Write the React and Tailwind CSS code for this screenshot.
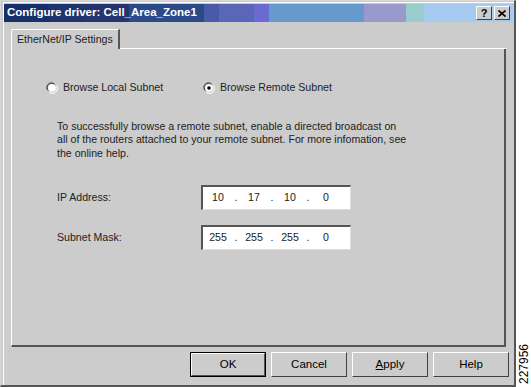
export default function App() {
  const font = { fontFamily: '"Liberation Sans", Arial, sans-serif' };
  return (
    <div className="w-[531px] h-[387px] bg-white flex overflow-hidden text-[10.6px] text-black" style={font}>
      <div className="w-[516px] shrink-0 h-[387px] bg-[#cccccc] border-l border-t border-l-[#d8d8d8] border-t-[#d8d8d8] border-r-2 border-b-2 border-r-[#555555] border-b-[#555555] flex flex-col pl-[1px] pt-[1px]">
        <div className="ml-[1px] border-l border-t border-white flex flex-col flex-1 pr-[1px]">
          {/* Title bar */}
          <div className="relative h-[18px] mt-[1px] flex items-center">
            <div className="absolute inset-0 flex">
              <div className="w-[45px] bg-[#15306a]"></div>
              <div className="w-[35px] bg-[#1d346e]"></div>
              <div className="w-[45px] bg-[#25336e]"></div>
              <div className="w-[75px] bg-[#2a4a8a]"></div>
              <div className="w-[15px] bg-[#4b5aa6]"></div>
              <div className="w-[35px] bg-[#5a67b8]"></div>
              <div className="w-[15px] bg-[#6a6ad2]"></div>
              <div className="w-[95px] bg-[#6699cc]"></div>
              <div className="w-[42px] bg-[#9999cc]"></div>
              <div className="w-[18px] bg-[#99cccc]"></div>
              <div className="flex-1 bg-[#a6caf0]"></div>
            </div>
            <span className="relative ml-[3px] text-white font-bold text-[11.5px]">Configure driver: Cell_Area_Zone1</span>
            <div className="relative ml-auto mr-[3px] flex gap-[2px]">
              <div className="w-[16px] h-[14px] bg-[#cccccc] border border-t-white border-l-white border-r-[#404040] border-b-[#404040] flex items-center justify-center font-bold text-[11px] leading-none">?</div>
              <div className="w-[16px] h-[14px] bg-[#cccccc] border border-t-white border-l-white border-r-[#404040] border-b-[#404040] flex items-center justify-center">
                <svg width="8" height="7" viewBox="0 0 8 7"><path d="M0.5 0.5 L7.5 6.5 M7.5 0.5 L0.5 6.5" stroke="black" strokeWidth="1.6" /></svg>
              </div>
            </div>
          </div>

          {/* Tabs */}
          <div className="flex flex-col pl-[7px] pr-[7px] pt-[7px]">
            <div className="flex items-end">
              <div className="h-[20px] px-[5px] flex items-center bg-[#cccccc] border-l border-t border-white border-r-2 border-r-[#555555] rounded-tl-[2px] text-[#222]">EtherNet/IP Settings</div>
              <div className="flex-1 border-b border-white"></div>
            </div>
            <div className="h-[298px] border-l border-white border-r-2 border-b-2 border-r-[#555555] border-b-[#555555] flex flex-col">
              <div className="flex items-center mt-[31px] pl-[34px] text-[#222]">
                <div className="flex items-center gap-[5px] w-[157px]">
                  <Radio checked={false} />
                  <span>Browse Local Subnet</span>
                </div>
                <div className="flex items-center gap-[5px]">
                  <Radio checked={true} />
                  <span>Browse Remote Subnet</span>
                </div>
              </div>
              <p className="mt-[24px] ml-[45px] w-[350px] leading-[13.5px] text-[#222]">
                To successfully browse a remote subnet, enable a directed broadcast on all of the routers attached to your remote subnet. For more infomation, see the online help.
              </p>
              <div className="mt-[25px] ml-[45px] flex items-center">
                <span className="w-[144px] text-[#222]">IP Address:</span>
                <IpBox parts={["10", "17", "10", "0"]} />
              </div>
              <div className="mt-[15px] ml-[45px] flex items-center">
                <span className="w-[144px] text-[#222]">Subnet Mask:</span>
                <IpBox parts={["255", "255", "255", "0"]} />
              </div>
            </div>
          </div>

          {/* Buttons */}
          <div className="flex justify-end gap-[5px] pr-[4px] mt-[5px] text-[11.5px]">
            <div className="w-[76px] h-[25px] border border-black">
              <div className="w-full h-full border border-t-white border-l-white border-r-[#555555] border-b-[#555555] flex items-center justify-center">OK</div>
            </div>
            <Btn>Cancel</Btn>
            <Btn><span><span className="underline">A</span>pply</span></Btn>
            <Btn>Help</Btn>
          </div>
        </div>
      </div>
      <div className="w-[15px] shrink-0 relative overflow-visible">
        <span className="absolute left-[-14px] top-[358px] text-[12px] leading-none -rotate-90 whitespace-nowrap w-[44px] text-center">227956</span>
      </div>
    </div>
  );
}

function Btn({ children }) {
  return (
    <div className="w-[76px] h-[25px] border border-t-white border-l-white border-r-[#404040] border-b-[#404040] flex items-center justify-center bg-[#cccccc]">
      {children}
    </div>
  );
}

function Radio({ checked }) {
  return (
    <svg width="12" height="12" viewBox="0 0 12 12">
      <path d="M1.5 8.5 A5 5 0 0 1 8.5 1.5" stroke="#808080" strokeWidth="1" fill="none" />
      <path d="M2.5 8.5 A4 4 0 0 1 8.5 2.5" stroke="#404040" strokeWidth="1" fill="none" />
      <circle cx="6" cy="6" r="3.8" fill="white" />
      <path d="M10.5 3.5 A5 5 0 0 1 3.5 10.5" stroke="white" strokeWidth="1" fill="none" />
      {checked && <circle cx="6" cy="6" r="1.8" fill="black" />}
    </svg>
  );
}

function IpBox({ parts }) {
  return (
    <div className="w-[150px] h-[25px] bg-white border-t-2 border-l-2 border-t-[#555555] border-l-[#555555] border-r border-b border-r-[#dddddd] border-b-[#dddddd] flex items-center text-[#222] text-[10.6px]">
      <span className="w-[30px] text-center">{parts[0]}</span>
      <span className="w-[6px] text-center">.</span>
      <span className="w-[30px] text-center">{parts[1]}</span>
      <span className="w-[6px] text-center">.</span>
      <span className="w-[30px] text-center">{parts[2]}</span>
      <span className="w-[6px] text-center">.</span>
      <span className="w-[30px] text-center">{parts[3]}</span>
    </div>
  );
}
